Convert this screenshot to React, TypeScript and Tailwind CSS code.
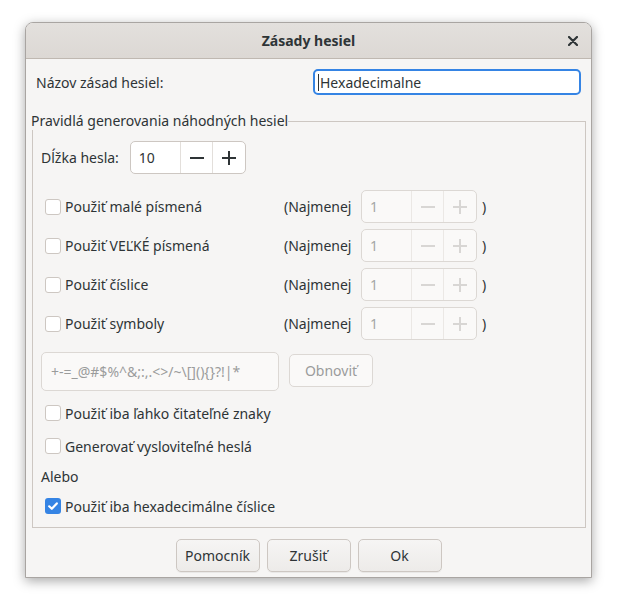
import React from "react";

const font = "font-['Noto_Sans',sans-serif]";

const Minus = ({ className }: { className: string }) => (
  <svg width="16" height="16" viewBox="0 0 16 16" className={className}>
    <rect x="1" y="7" width="14" height="2" fill="currentColor" />
  </svg>
);

const Plus = ({ className }: { className: string }) => (
  <svg width="16" height="16" viewBox="0 0 16 16" className={className}>
    <rect x="1" y="7" width="14" height="2" fill="currentColor" />
    <rect x="7" y="1" width="2" height="14" fill="currentColor" />
  </svg>
);

const SpinButton = ({
  value,
  disabled,
}: {
  value: string;
  disabled?: boolean;
}) => (
  <div
    className={
      "flex h-[33px] w-[116px] rounded-[5px] border " +
      (disabled
        ? "border-[#dcd8d4] bg-[#faf9f8] text-[#a4a7a7]"
        : "border-[#cdc7c2] bg-white text-[#2e3436]")
    }
  >
    <div className="flex w-[52px] items-center pl-[8px]">{value}</div>
    <div
      className={
        "flex w-[35px] items-center justify-center border-l " +
        (disabled ? "border-[#ebe8e5]" : "border-[#e3dfdb]")
      }
    >
      <Minus className={disabled ? "text-[#d8d6d4]" : "text-[#2e3436]"} />
    </div>
    <div
      className={
        "flex w-[35px] items-center justify-center border-l " +
        (disabled ? "border-[#ebe8e5]" : "border-[#e3dfdb]")
      }
    >
      <Plus className={disabled ? "text-[#d8d6d4]" : "text-[#2e3436]"} />
    </div>
  </div>
);

const CheckBox = ({ checked }: { checked?: boolean }) =>
  checked ? (
    <span className="flex h-[16px] w-[16px] shrink-0 items-center justify-center rounded-[3px] bg-[#3584e4]">
      <svg width="12" height="12" viewBox="0 0 12 12">
        <path
          d="M2.2 6.3 L4.8 8.8 L9.8 3.4"
          fill="none"
          stroke="white"
          strokeWidth="2.2"
          strokeLinecap="round"
          strokeLinejoin="round"
        />
      </svg>
    </span>
  ) : (
    <span className="h-[16px] w-[16px] shrink-0 rounded-[3px] border border-[#cdc7c2] bg-white" />
  );

const CheckRow = ({
  label,
  checked,
  className = "",
}: {
  label: string;
  checked?: boolean;
  className?: string;
}) => (
  <div className={"flex items-center gap-[4px] pl-[4px] " + className}>
    <CheckBox checked={checked} />
    <span>{label}</span>
  </div>
);

const CharRow = ({ label }: { label: string }) => (
  <div className="flex h-[33px] items-center">
    <div className="w-[243px]">
      <CheckRow label={label} />
    </div>
    <span className="w-[77px]">(Najmenej</span>
    <SpinButton value="1" disabled />
    <span className="ml-[5px]">)</span>
  </div>
);

const DialogButton = ({ label }: { label: string }) => (
  <button className="flex h-[33px] w-[84px] items-center justify-center rounded-[5px] border border-[#cdc7c2] bg-gradient-to-b from-[#f6f5f4] to-[#edebe9] text-[#2e3436] shadow-[0_1px_0_rgba(0,0,0,0.05)]">
    {label}
  </button>
);

export default function App() {
  return (
    <div className={"h-screen w-full bg-white pl-[25px] pt-[22px] " + font}>
      <div className="flex h-[556px] w-[567px] flex-col overflow-hidden rounded-t-[8px] border border-[#a9a5a2] bg-[#f6f5f4] text-[14px] text-[#2e3436] shadow-[0_3px_12px_rgba(0,0,0,0.35)]">
        {/* header */}
        <div className="relative flex h-[36px] shrink-0 items-center justify-center border-b border-[#bfb8b1] bg-gradient-to-b from-[#e3e0dd] to-[#dcd8d4]">
          <span className="text-[14px] font-bold text-[#2e3436]">
            Zásady hesiel
          </span>
          <svg
            width="10"
            height="10"
            viewBox="0 0 10 10"
            className="absolute right-[13px] top-[13px]"
          >
            <path
              d="M1 1 L9 9 M9 1 L1 9"
              stroke="#2e3436"
              strokeWidth="2.2"
              strokeLinecap="round"
            />
          </svg>
        </div>

        {/* policy name */}
        <div className="mt-[10px] flex h-[26px] items-center pl-[10px] pr-[10px]">
          <span className="flex-1">Názov zásad hesiel:</span>
          <div className="flex h-[26px] w-[268px] items-center rounded-[5px] border-2 border-[#3584e4] bg-white pl-[3px]">
            <span className="mr-[1px] h-[17px] w-px bg-[#2e3436]" />
            <span>Hexadecimalne</span>
          </div>
        </div>

        {/* frame */}
        <div className="ml-[5px] mr-[5px] mt-[17px] flex flex-1 flex-col">
          <div className="flex h-[18px] items-center">
            <span className="leading-[18px]">
              Pravidlá generovania náhodných hesiel
            </span>
            <div className="h-[9px] flex-1 self-end border-r border-t border-[#cdc7c2]" />
          </div>
          <div className="ml-[1px] flex h-[398px] flex-col border-b border-l border-r border-[#cdc7c2] pl-[8px]">
            <div className="mt-[11px] flex items-center gap-[11px]">
              <span>Dĺžka hesla:</span>
              <SpinButton value="10" />
            </div>

            <div className="mt-[16px] flex flex-col gap-[6px]">
              <CharRow label="Použiť malé písmená" />
              <CharRow label="Použiť VEĽKÉ písmená" />
              <CharRow label="Použiť číslice" />
              <CharRow label="Použiť symboly" />
            </div>

            <div className="mt-[12px] flex items-start gap-[10px]">
              <div className="flex h-[39px] w-[238px] items-center rounded-[5px] border border-[#dcd8d4] bg-[#faf9f8] pl-[9px] text-[#9a9c9c]">
                +-=_@#$%^&amp;;:,.&lt;&gt;/~\[](){"{}"}?!|*
              </div>
              <div className="mt-[2px] flex h-[33px] w-[84px] items-center justify-center rounded-[5px] border border-[#dcd8d4] bg-[#faf9f8] text-[#9a9c9c]">
                Obnoviť
              </div>
            </div>

            <CheckRow
              label="Použiť iba ľahko čitateľné znaky"
              className="mt-[14px] h-[16px]"
            />
            <CheckRow
              label="Generovať vysloviteľné heslá"
              className="mt-[17px] h-[16px]"
            />
            <div className="mt-[14px] flex h-[17px] items-center">Alebo</div>
            <CheckRow
              label="Použiť iba hexadecimálne číslice"
              checked
              className="mt-[13px] h-[16px]"
            />
          </div>
        </div>

        {/* buttons */}
        <div className="mb-[5px] flex justify-center gap-[7px]">
          <DialogButton label="Pomocník" />
          <DialogButton label="Zrušiť" />
          <DialogButton label="Ok" />
        </div>
      </div>
    </div>
  );
}
